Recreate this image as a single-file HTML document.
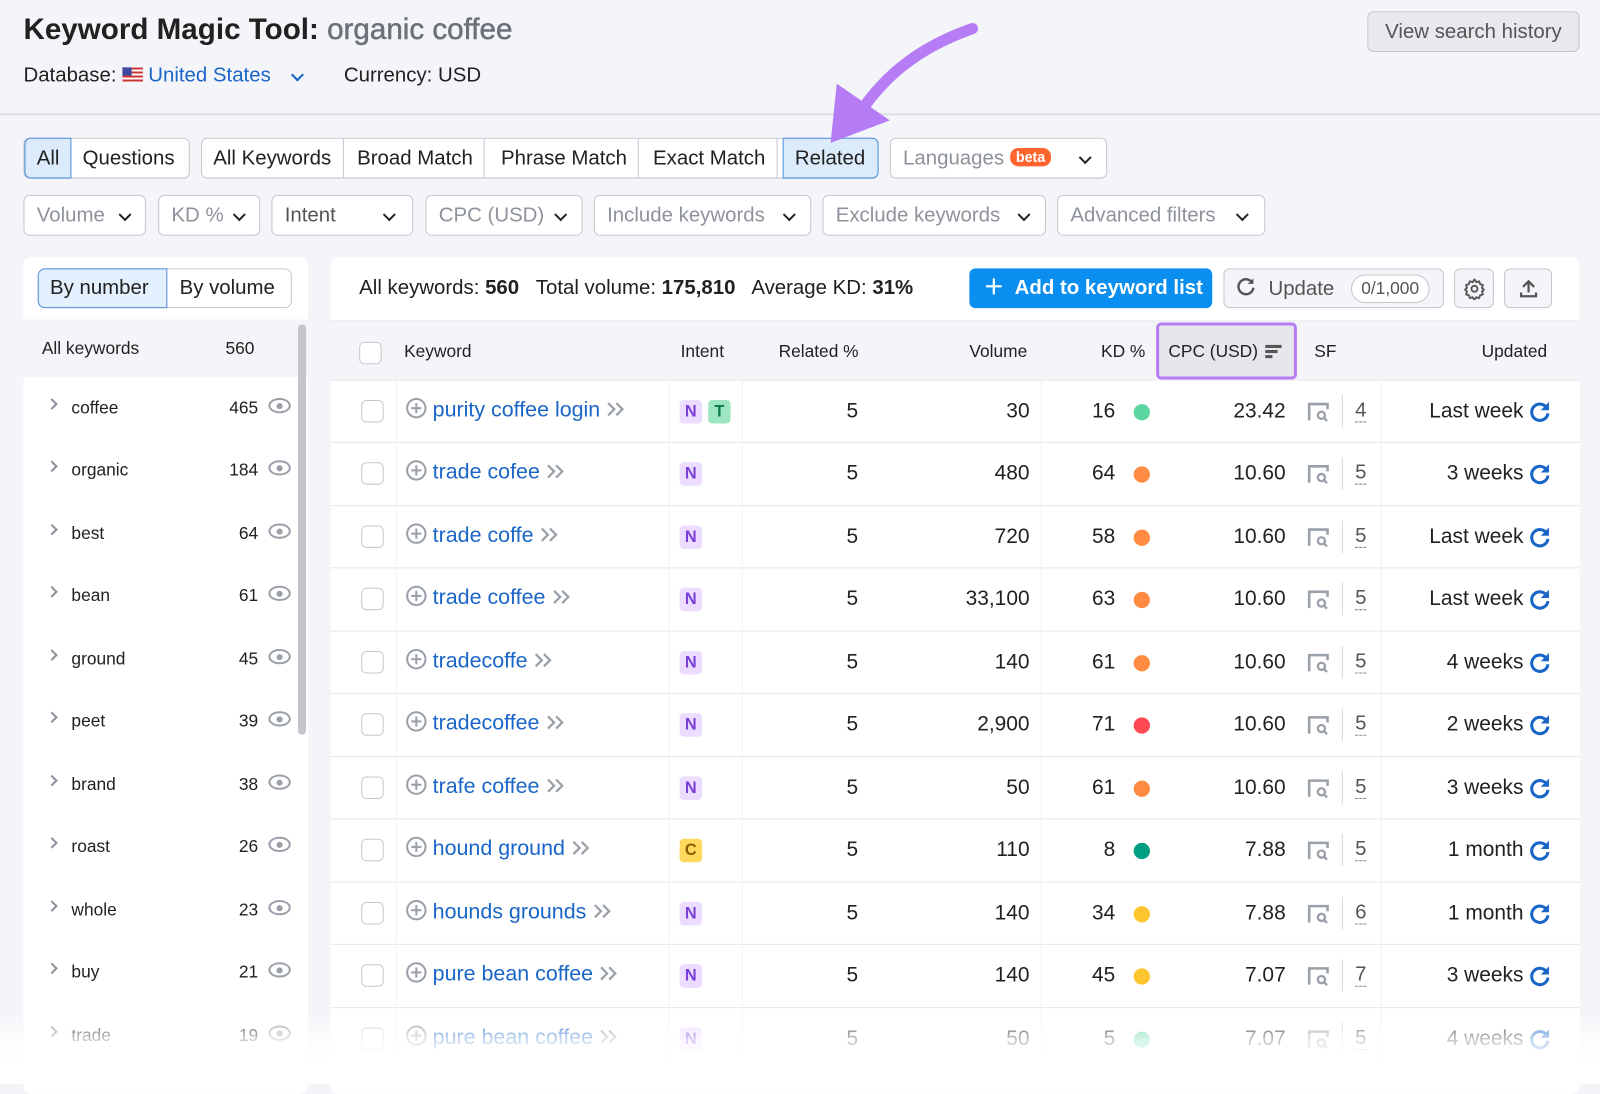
<!DOCTYPE html>
<html><head><meta charset="utf-8">
<style>
*{box-sizing:border-box;margin:0;padding:0}
body{width:1600px;height:1062px;overflow:hidden;background:#f4f5f9;font-family:"Liberation Sans",Arial,sans-serif;color:#212121;position:relative}
#w{position:absolute;left:0;top:0;width:1568px;height:1041px;transform:scale(1.0204);transform-origin:0 0}
.a{position:absolute;white-space:nowrap}
.btn{position:absolute;border:1px solid #c4c7cf;background:#fff;border-radius:6px;height:40px;font-size:20px;line-height:38px}
.seg{position:absolute;top:0;height:38px;padding:0 11px;border-right:1px solid #c4c7cf}
.dd{color:#8d929b;padding-left:12px}
.chev{position:absolute;top:14px;width:9px;height:9px;border-right:2.4px solid #222;border-bottom:2.4px solid #222;transform:rotate(45deg)}
.row{position:absolute;left:324px;width:1224px;height:62px;border-top:1px solid #e6e7ea;background:#fff;font-size:20px}
.in{position:absolute;left:7px;top:0;width:1217px;height:62px}
.cb{position:absolute;left:23px;top:19px;width:22px;height:22px;border:1.5px solid #c4c7cf;border-radius:5px;background:#fff}
.kw{position:absolute;left:67px;top:17px;color:#1a66c8;font-size:21px}
.plus{display:inline-block;width:20px;height:20px;border:2px solid #9aa0a8;border-radius:50%;position:relative;vertical-align:-2px;margin-right:6px}
.plus:before{content:"";position:absolute;left:7px;top:3px;width:2px;height:10px;background:#9aa0a8}
.plus:after{content:"";position:absolute;left:3px;top:7px;width:10px;height:2px;background:#9aa0a8}
.tag{position:absolute;top:19px;width:22px;height:23px;border-radius:4px;font-size:16px;line-height:23px;text-align:center;font-weight:bold}
.N{background:#ecdcff;color:#7a3fd8}.T{background:#9ee6c3;color:#0b7a4f}.C{background:#ffd95c;color:#8a5a00}
.r{position:absolute;top:18px;text-align:right;font-size:20.5px}
.dot{position:absolute;top:23px;left:780px;width:16px;height:16px;border-radius:50%}
.vl{position:absolute;top:0;width:1px;height:62px;background:#f0f1f3}
.sb{position:absolute;left:23px;width:268px;height:61px;font-size:17px;background:#fff}
.sbc{position:absolute;left:24px;top:22px;width:8px;height:8px;border-right:2px solid #8d929b;border-bottom:2px solid #8d929b;transform:rotate(-45deg)}
.eye{position:absolute;left:240px;top:20px;width:22px;height:15px;border:2.3px solid #9aa0a8;border-radius:50%}
.eye:after{content:"";position:absolute;left:6px;top:3px;width:6px;height:6px;border-radius:50%;background:#9aa0a8}
</style></head><body><div id="w">

<div class="a" style="left:23px;top:13px;font-size:29px;font-weight:bold">Keyword Magic Tool: <span style="color:#6c717a;font-weight:normal;-webkit-text-stroke:0.5px #6c717a">organic coffee</span></div>
<div class="a" style="left:23px;top:63px;font-size:20px">Database: <span style="display:inline-block;width:20px;height:14px;background:repeating-linear-gradient(#c33 0 2px,#fff 2px 4px);position:relative;vertical-align:0"><span style="position:absolute;left:0;top:0;width:9px;height:8px;background:#3b4aa0"></span></span> <span style="color:#1a66c8">United States</span></div>
<div class="chev" style="left:287px;top:69px;border-color:#1a66c8"></div>
<div class="a" style="left:337px;top:63px;font-size:20px">Currency: USD</div>
<div class="btn" style="left:1340px;top:11px;width:208px;background:#e8e9ed;color:#555;text-align:center">View search history</div>
<div class="a" style="left:0;top:111px;width:1600px;height:2px;background:#dcdee3"></div>

<div class="btn" style="left:23px;top:135px;width:163px">
 <div class="seg" style="left:0;background:#dcebfb;border:1px solid #4f8fd9;border-radius:6px 0 0 6px;top:-1px;height:40px;line-height:38px;color:#222">All</div>
 <div class="seg" style="left:46px;border:none">Questions</div>
</div>
<div class="btn" style="left:197px;top:135px;width:664px">
 <div class="seg" style="left:0">All Keywords</div>
 <div class="seg" style="left:141px">Broad Match</div>
 <div class="seg" style="left:282px">Phrase Match</div>
 <div class="seg" style="left:431px">Exact Match</div>
 <div class="seg" style="left:569px;width:94px;top:-1px;height:40px;background:#dcebfb;border:1px solid #4f8fd9;border-radius:0 6px 6px 0">Related</div>
</div>
<div class="btn dd" style="left:872px;top:135px;width:213px">Languages <span style="display:inline-block;background:#ff642d;color:#fff;font-size:14px;font-weight:bold;border-radius:8px;line-height:18px;padding:0 6px;vertical-align:2px">beta</span><div class="chev" style="left:186px"></div></div>

<div class="btn dd" style="left:23px;top:191px;width:120px">Volume<div class="chev" style="left:94px"></div></div>
<div class="btn dd" style="left:155px;top:191px;width:100px">KD %<div class="chev" style="left:74px"></div></div>
<div class="btn dd" style="left:266px;top:191px;width:139px;color:#555">Intent<div class="chev" style="left:110px"></div></div>
<div class="btn dd" style="left:417px;top:191px;width:154px">CPC (USD)<div class="chev" style="left:127px"></div></div>
<div class="btn dd" style="left:582px;top:191px;width:213px">Include keywords<div class="chev" style="left:186px"></div></div>
<div class="btn dd" style="left:806px;top:191px;width:219px">Exclude keywords<div class="chev" style="left:192px"></div></div>
<div class="btn dd" style="left:1036px;top:191px;width:204px">Advanced filters<div class="chev" style="left:176px"></div></div>

<div class="a" style="left:23px;top:252px;width:279px;height:820px;background:#fff;border-radius:8px"></div>
<div class="btn" style="left:37px;top:263px;width:249px;height:39px;border-radius:7px">
 <div class="seg" style="left:-1px;top:-1px;height:39px;width:127px;background:#e3f0fd;border:1px solid #4f8fd9;border-radius:7px 0 0 7px;line-height:37px">By number</div>
 <div class="a" style="left:138px;top:-1px;line-height:39px">By volume</div>
</div>
<div class="sb" style="top:313px;background:#f4f5f9;height:57px;width:279px"><span class="a" style="left:18px;top:19px">All keywords</span><span class="a" style="left:198px;top:19px">560</span></div>

<div class="a" style="left:324px;top:252px;width:1224px;height:820px;background:#fff;border-radius:8px"></div>
<div class="a" style="left:352px;top:271px;font-size:20px">All keywords: <b>560</b> &nbsp; Total volume: <b>175,810</b> &nbsp; Average KD: <b>31%</b></div>
<div class="a" style="left:950px;top:263px;width:238px;height:39px;background:#0a8ef0;border-radius:6px;color:#fff;font-size:20px;font-weight:bold;line-height:39px;padding-left:14px">＋&nbsp; Add to keyword list</div>
<div class="btn" style="left:1199px;top:263px;width:216px;height:39px;background:#f4f5f9;color:#555;padding-left:10px">
 <svg width="22" height="22" viewBox="0 0 24 24" style="vertical-align:-3px"><path d="M19 8a8 8 0 1 0 1 5" fill="none" stroke="#555" stroke-width="2.6"/><path d="M20 3v6h-6z" fill="#555"/></svg> &nbsp;Update
 <span style="position:absolute;left:124px;top:5px;height:28px;line-height:26px;padding:0 9px;border:1px solid #c4c7cf;border-radius:14px;background:#fff;font-size:17px">0/1,000</span></div>
<div class="btn" style="left:1425px;top:263px;width:39px;height:39px;background:#f4f5f9;text-align:center"><svg width="22" height="22" viewBox="0 0 24 24" style="margin-top:8px"><circle cx="12" cy="12" r="3.2" fill="none" stroke="#555" stroke-width="2"/><path d="M12 2l2 3 3-1 1 3 3 1-1 3 2 2-2 2 1 3-3 1-1 3-3-1-2 3-2-3-3 1-1-3-3-1 1-3-2-2 2-2-1-3 3-1 1-3 3 1z" fill="none" stroke="#555" stroke-width="2" stroke-linejoin="round"/></svg></div>
<div class="btn" style="left:1474px;top:263px;width:47px;height:39px;background:#f4f5f9;text-align:center"><svg width="22" height="22" viewBox="0 0 24 24" style="margin-top:8px"><path d="M12 16V4M6 10l6-6 6 6M4 16v4h16v-4" fill="none" stroke="#555" stroke-width="2.4"/></svg></div>

<div class="a" style="left:324px;top:314px;width:1224px;height:58px;background:#f4f5f9;border-top:1px solid #e6e7ea;font-size:17px">
 <div class="cb" style="left:28px;top:20px"></div>
 <span class="a" style="left:72px;top:20px">Keyword</span>
 <span class="a" style="left:343px;top:20px">Intent</span>
 <span class="a" style="left:439px;top:20px">Related %</span>
 <span class="a" style="left:626px;top:20px">Volume</span>
 <span class="a" style="left:755px;top:20px">KD %</span>
 <div class="a" style="left:809px;top:1px;width:138px;height:56px;border:3px solid #b57cf5;border-radius:5px;background:#e6e7ec"></div>
 <span class="a" style="left:821px;top:20px">CPC (USD)</span>
 <div class="a" style="left:916px;top:23px;width:16px;height:2.5px;background:#555"></div>
 <div class="a" style="left:916px;top:28px;width:12px;height:2.5px;background:#555"></div>
 <div class="a" style="left:916px;top:33px;width:7px;height:2.5px;background:#555"></div>
 <span class="a" style="left:964px;top:20px">SF</span>
 <span class="a" style="left:1128px;top:20px">Updated</span>
</div>

<div id="rows"></div>
<div class="a" style="left:292px;top:318px;width:8px;height:402px;background:#c4c6cb;border-radius:4px"></div>

<svg class="a" style="left:0;top:0" width="1600" height="200"><path d="M953 28 C905 45 870 70 843 110" fill="none" stroke="#b57cf5" stroke-width="11" stroke-linecap="round"/><path d="M820 82 L872 118 L814 140 Z" fill="#b57cf5"/></svg>

<div class="a" style="left:0;top:990px;width:1600px;height:72px;background:linear-gradient(rgba(255,255,255,0),rgba(255,255,255,0.75) 40%,#fff 80%)"></div>

<script>
var d=[["purity coffee login","NT","30","16","#5cd6a0","23.42","4","Last week"],
["trade cofee","N","480","64","#ff8c42","10.60","5","3 weeks"],
["trade coffe","N","720","58","#ff8c42","10.60","5","Last week"],
["trade coffee","N","33,100","63","#ff8c42","10.60","5","Last week"],
["tradecoffe","N","140","61","#ff8c42","10.60","5","4 weeks"],
["tradecoffee","N","2,900","71","#ff4953","10.60","5","2 weeks"],
["trafe coffee","N","50","61","#ff8c42","10.60","5","3 weeks"],
["hound ground","C","110","8","#009f81","7.88","5","1 month"],
["hounds grounds","N","140","34","#ffc52e","7.88","6","1 month"],
["pure bean coffee","N","140","45","#ffc52e","7.07","7","3 weeks"],
["pure bean coffee","N","50","5","#5cd6a0","7.07","5","4 weeks"]];
var s=[["coffee",465],["organic",184],["best",64],["bean",61],["ground",45],["peet",39],["brand",38],["roast",26],["whole",23],["buy",21],["trade",19]];
var h="";
var gg='<svg width="20" height="16" viewBox="0 0 20 16" style="margin-left:6px;vertical-align:-1px"><path d="M2 2l6 6-6 6M10 2l6 6-6 6" fill="none" stroke="#9aa0a8" stroke-width="2.2"/></svg>';
d.forEach(function(r,i){var t=372+i*61.45;var tags="";r[1].split("").forEach(function(c,j){tags+='<div class="tag '+c+'" style="left:'+(335+j*28)+'px">'+c+'</div>'});
h+='<div class="row" style="top:'+t+'px"><div class="in"><div class="vl" style="left:57px"></div><div class="vl" style="left:324px"></div><div class="vl" style="left:396px"></div><div class="vl" style="left:689px"></div><div class="vl" style="left:1022px"></div><div class="cb"></div><div class="kw"><span class="plus"></span>'+r[0]+gg+'</div>'+tags+
'<div class="r" style="left:440px;width:70px">5</div><div class="r" style="left:578px;width:100px">'+r[2]+'</div><div class="r" style="left:700px;width:62px">'+r[3]+'</div><div class="dot" style="background:'+r[4]+'"></div><div class="r" style="left:830px;width:99px">'+r[5]+'</div>'+
'<svg class="a" style="left:950px;top:21px" width="22" height="20" viewBox="0 0 22 20"><path d="M2 18V2h18v5" fill="none" stroke="#9aa0a8" stroke-width="2.5"/><circle cx="14" cy="13" r="3.5" fill="none" stroke="#9aa0a8" stroke-width="2.3"/><path d="M16.5 15.5l3 3" stroke="#9aa0a8" stroke-width="2.3"/></svg><div class="a" style="left:984px;top:14px;width:1px;height:32px;background:#d5d7db"></div><div class="a" style="left:997px;top:18px;color:#555;border-bottom:1.5px dashed #888;line-height:22px">'+r[6]+'</div>'+
'<div class="r" style="left:1020px;width:142px">'+r[7]+'</div><svg class="a" style="left:1166px;top:19px" width="24" height="24" viewBox="0 0 24 24"><path d="M19 8a8 8 0 1 0 1 5" fill="none" stroke="#1a66c8" stroke-width="3"/><path d="M21 2v8h-8z" fill="#1a66c8"/></svg></div></div>';});
s.forEach(function(x,i){var t=370+i*61.45;h+='<div class="sb" style="top:'+t+'px"><div class="sbc"></div><span class="a" style="left:47px;top:20px">'+x[0]+'</span><span class="a" style="left:195px;top:20px;width:35px;text-align:right">'+x[1]+'</span><div class="eye"></div></div>';});
document.getElementById("rows").innerHTML=h;
</script>
</div></body></html>
